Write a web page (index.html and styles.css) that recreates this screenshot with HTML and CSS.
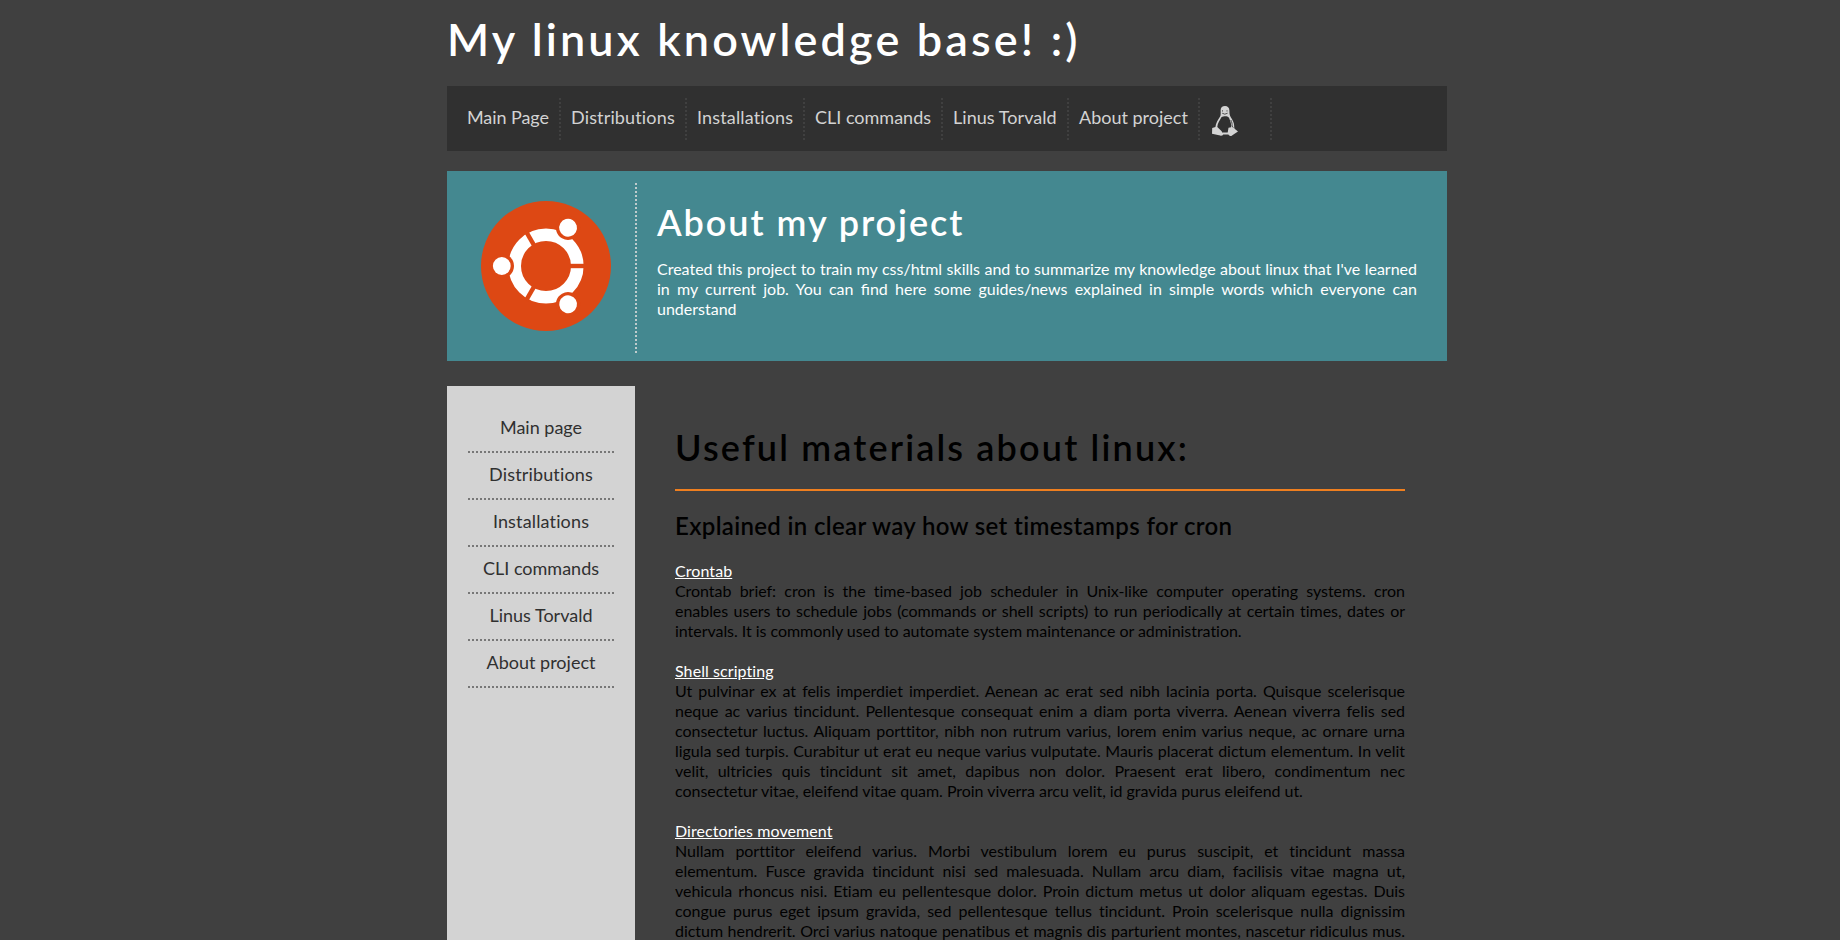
FILE: index.html
```html
<!DOCTYPE html>
<html lang="en">
<head>
<meta charset="utf-8">
<title>My linux knowledge base! :)</title>
<link rel="stylesheet" href="styles.css">
</head>
<body>
<div class="container">
  <h1 class="logo">My linux knowledge base! :)</h1>
  <nav class="nav">
    <a class="nav-item nav-main">Main Page</a>
    <a class="nav-item nav-dist">Distributions</a>
    <a class="nav-item nav-inst">Installations</a>
    <a class="nav-item nav-cli">CLI commands</a>
    <a class="nav-item nav-linus">Linus Torvald</a>
    <a class="nav-item nav-about">About project</a>
    <a class="nav-item nav-tux">
      <svg class="tux" viewBox="0 0 26 30">
        <path class="tux-body" fill-rule="evenodd" d="M8.600 4.200C8.600 1.500 10.400 0 13 0s4.400 1.700 4.400 4.500c0 3.200.2 4.800 1.400 6.800 1.700 2.800 3.400 5.300 3.400 8.700v1.200l.4 1.500 3.400 2.800-3.400 2.200-3.300 2.200c-1.300.3-2.400-.1-2.900-1.300h-5.200c-.6 1.200-1.800 1.400-3 1L0 27.800.2 22l3.200-.9C3.800 17.500 6 13.500 8.100 10.500c.8-1.400.6-3.800.5-6.300zM9.400 11.300C8 14 5.400 17.500 5.300 21l4.400 4.300.4 1.300h5.600l.8-4.800 2.600-.6c.6-3.400-1.200-6.600-2.100-9.400-1-1.300-2.300-1.600-3.600-1.600s-3 .1-4 1.100z"/>
        <path class="tux-mark" d="M10.500 4.300v1.200M15 4.300v1.200M10.200 7.200l2.600 1 2.800-1"/>
        <path class="tux-mark" d="M18.800 14c1 2 1.500 4 1.300 6l1.200 1.700"/>
      </svg>
    </a>
  </nav>
  <section class="banner">
    <div class="banner-logo">
      <svg class="ubuntu" viewBox="-65 -65 130 130">
        <circle class="orange" r="65"/>
        <circle class="ring" r="31.300"/>
        <g id="arm">
          <circle class="gap" cx="-44.200" r="12.200"/>
          <circle class="head" cx="-44.200" r="8.900"/>
          <path class="cut" d="M23 0H40"/>
        </g>
        <use href="#arm" transform="rotate(120)"/>
        <use href="#arm" transform="rotate(240)"/>
      </svg>
    </div>
    <div class="banner-text">
      <h2 class="banner-title">About my project</h2>
      <p class="banner-copy">Created this project to train my css/html skills and to summarize my knowledge about linux that I've learned in my current job. You can <span class="lig">find</span> here some guides/news explained in simple words which everyone can understand</p>
    </div>
  </section>
  <div class="main">
    <aside class="sidebar">
      <a class="side-item">Main page</a>
      <a class="side-item side-wide">Distributions</a>
      <a class="side-item side-wide">Installations</a>
      <a class="side-item">CLI commands</a>
      <a class="side-item">Linus Torvald</a>
      <a class="side-item">About project</a>
    </aside>
    <article class="content">
      <h2 class="content-title">Useful materials about linux:</h2>
      <h3 class="content-subtitle">Explained in clear way how set timestamps for cron</h3>
      <a class="link">Crontab</a>
      <p class="copy">Crontab brief: cron is the time-based job scheduler in Unix-like computer operating systems. cron enables users to schedule jobs (commands or shell scripts) to run periodically at certain times, dates or intervals. It is commonly used to automate system maintenance or administration.</p>
      <a class="link">Shell scripting</a>
      <p class="copy">Ut pulvinar ex at felis imperdiet imperdiet. Aenean ac erat sed nibh lacinia porta. Quisque scelerisque neque ac varius tincidunt. Pellentesque consequat enim a diam porta viverra. Aenean viverra felis sed consectetur luctus. Aliquam porttitor, nibh non rutrum varius, lorem enim varius neque, ac ornare urna ligula sed turpis. Curabitur ut erat eu neque varius vulputate. Mauris placerat dictum elementum. In velit velit, ultricies quis tincidunt sit amet, dapibus non dolor. Praesent erat libero, condimentum nec consectetur vitae, eleifend vitae quam. Proin viverra arcu velit, id gravida purus eleifend ut.</p>
      <a class="link">Directories movement</a>
      <p class="copy copy-last">Nullam porttitor eleifend varius. Morbi vestibulum lorem eu purus suscipit, et tincidunt massa elementum. Fusce gravida tincidunt nisi sed malesuada. Nullam arcu diam, facilisis vitae magna ut, vehicula rhoncus nisi. Etiam eu pellentesque dolor. Proin dictum metus ut dolor aliquam egestas. Duis congue purus eget ipsum gravida, sed pellentesque tellus tincidunt. Proin scelerisque nulla dignissim dictum hendrerit. Orci varius natoque penatibus et magnis dis parturient montes, nascetur ridiculus mus.</p>
    </article>
  </div>
</div>
</body>
</html>
```
FILE: styles.css
```css
* { box-sizing: border-box; }
html { height: 100%; overflow: hidden; }
body {
  margin: 0;
  height: 940px;
  overflow: hidden;
  background: #404040;
  color: #000;
  font-family: Lato, sans-serif;
  font-size: 16px;
  line-height: 20px;
  font-variant-ligatures: none;
}
h1, h2, h3, p { margin: 0; font-weight: 600; }
p { font-weight: 400; }
.lig { font-variant-ligatures: normal; }
.container {
  width: 1000px;
  height: 940px;
  margin-left: 447px;
  display: flex;
  flex-direction: column;
}
.logo {
  flex: none;
  height: 86px;
  padding-top: 12px;
  font-size: 45px;
  line-height: 54px;
  letter-spacing: 3.13px;
  color: #fff;
  white-space: nowrap;
}
.nav {
  flex: none;
  display: flex;
  height: 65px;
  padding: 12px 10px 11px;
  background: #303030;
  color: #d3d3d3;
  font-size: 18px;
  line-height: 22px;
}
.nav-item {
  height: 42px;
  padding: 8px 0 0 10px;
  border-right: 2px dotted #404040;
  white-space: nowrap;
}
.nav-main { width: 104px; letter-spacing: -0.08px; }
.nav-dist { width: 126px; letter-spacing: 0.15px; }
.nav-inst { width: 118px; letter-spacing: 0.15px; }
.nav-cli { width: 138px; }
.nav-linus { width: 126px; letter-spacing: 0.05px; }
.nav-about { width: 131px; }
.nav-tux { width: 72px; padding: 8px 12px; }
.tux { display: block; width: 26px; height: 30px; }
.tux-body { fill: #d3d3d3; }
.tux-mark { fill: none; stroke: #505050; stroke-width: 1; }
.banner {
  flex: none;
  display: flex;
  height: 190px;
  margin-top: 20px;
  padding: 12px 30px 8px 10px;
  background: #448890;
  color: #fff;
}
.banner-logo {
  width: 180px;
  height: 170px;
  padding: 18px 0 0 24px;
  border-right: 2px dotted #c0cccd;
}
.ubuntu { display: block; width: 130px; height: 130px; }
.orange { fill: #dd4814; }
.ring { fill: none; stroke: #fff; stroke-width: 12.6; }
.gap { fill: #dd4814; }
.head { fill: #fff; }
.cut { stroke: #dd4814; stroke-width: 4.4; }
.banner-text { width: 780px; padding: 17px 0 0 20px; }
.banner-title {
  font-size: 36px;
  line-height: 44px;
  letter-spacing: 1.95px;
}
.banner-copy { margin-top: 15px; text-align: justify; }
.main { flex: 1; display: flex; margin-top: 25px; min-height: 0; }
.sidebar {
  width: 188px;
  padding: 20px 21px;
  background: #d3d3d3;
  color: #303030;
  text-align: center;
}
.side-item {
  display: block;
  height: 47px;
  padding-top: 10px;
  border-bottom: 2px dotted #777;
  font-size: 18px;
  line-height: 22px;
}
.side-wide { letter-spacing: 0.15px; }
.content { width: 730px; margin-left: 40px; padding-top: 39px; }
.content-title {
  height: 66px;
  border-bottom: 2px solid #ef7f1f;
  font-size: 36px;
  line-height: 44px;
  letter-spacing: 2.16px;
}
.content-subtitle {
  margin: 20px 0 21px;
  font-size: 24px;
  line-height: 29px;
  letter-spacing: 0.34px;
}
.link { color: #fff; text-decoration: underline; letter-spacing: 0.08px; }
.copy { margin-bottom: 20px; text-align: justify; letter-spacing: -0.04px; }
.copy-last { text-align-last: justify; }
.copy-last { text-align-last: justify; }
```
